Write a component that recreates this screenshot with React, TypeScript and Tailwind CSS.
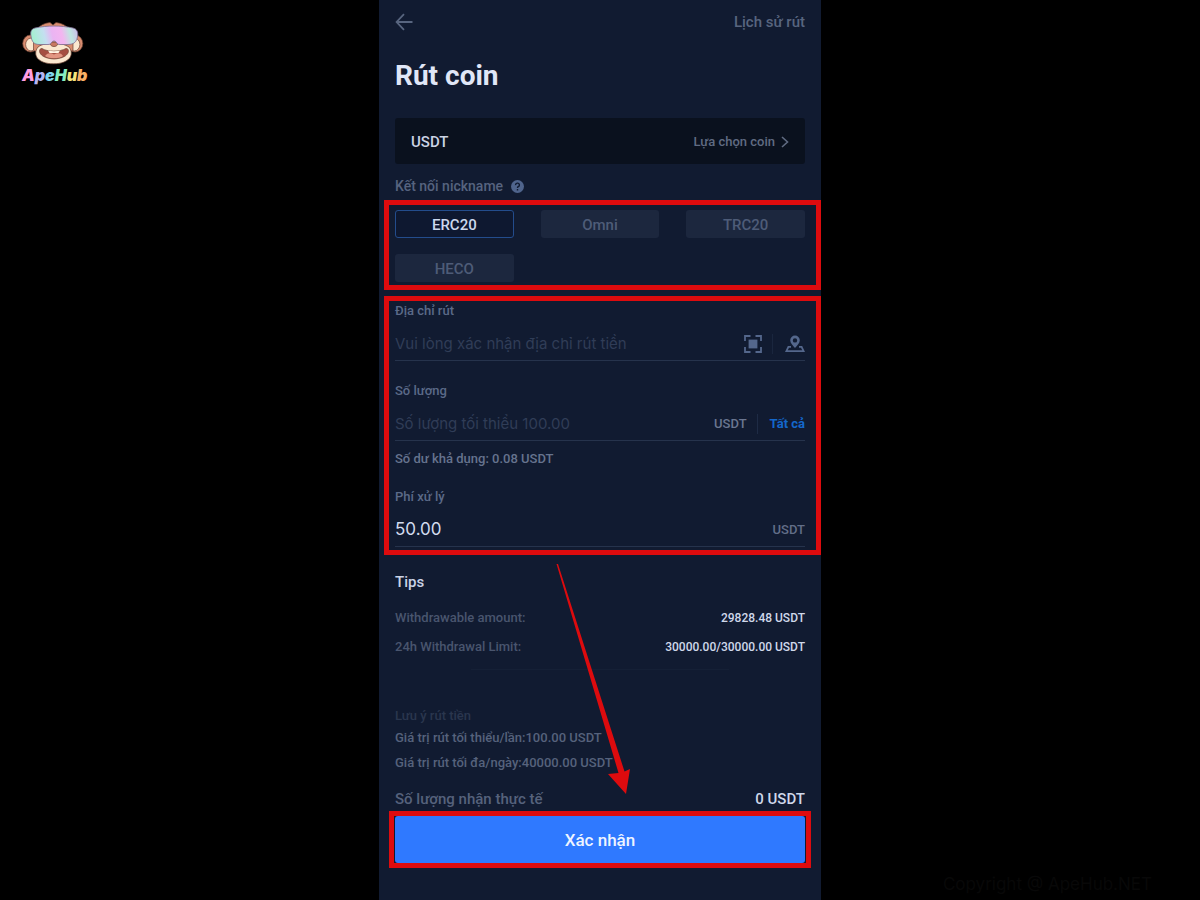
import React, { useState } from 'react';
import { clsx } from 'clsx';

const NETWORKS = ['ERC20', 'Omni', 'TRC20', 'HECO'];

const LOGO_LETTERS = [
  { char: 'A', className: 'text-[#ff9ee0]' },
  { char: 'p', className: 'text-[#b3b5f5]' },
  { char: 'e', className: 'text-[#7fd6f0]' },
  { char: 'H', className: 'text-[#86efc0]' },
  { char: 'u', className: 'text-[#f4e47c]' },
  { char: 'b', className: 'text-[#f9b066]' },
];

const Logo: React.FC = () => (
  <div className="flex flex-col items-start">
    <svg viewBox="-4 0 68 45" className="h-[45px] w-[68px]" aria-hidden="true">
      <defs>
        <linearGradient id="visor" x1="0" y1="0.1" x2="1" y2="0">
          <stop offset="0" stopColor="#a6efd2" />
          <stop offset="0.25" stopColor="#c4dff0" />
          <stop offset="0.42" stopColor="#eab4f2" />
          <stop offset="0.62" stopColor="#f3b5f0" />
          <stop offset="0.8" stopColor="#bfe6e0" />
          <stop offset="1" stopColor="#cdb6ea" />
        </linearGradient>
      </defs>
      <g stroke="#6b4234" strokeWidth="0.7">
        <ellipse cx="6.5" cy="21.5" rx="7.8" ry="8.5" fill="#d98d70" />
        <ellipse cx="51" cy="21.5" rx="7.8" ry="8.5" fill="#d98d70" />
        <ellipse cx="7" cy="22.5" rx="5.4" ry="6.4" fill="#fbe8d0" />
        <ellipse cx="50.5" cy="22.5" rx="5.4" ry="6.4" fill="#fbe8d0" />
        <path d="M9.5 20C10 9 14 2 26 0.5L29 3L32 0.5C44 2 48 9 49 20V28C46 32 12 32 9.5 28Z" fill="#d98d70" />
        <path d="M14 25C8 33 14 41.8 29.5 41.8S51 33 45 25C40 22 35 21 29.5 22C24 21 18 22 14 25Z" fill="#fbe8d0" />
        <path d="M18 26.5C23 30 36 30 42 26.5C46 26 47 36 30 37C13 36 14 26 18 26.5Z" fill="#a54f42" />
        <path d="M21 34C24 30.5 27 31 30 32.5C33 31 37 30.5 39 34C35 37 25 37 21 34Z" fill="#e29683" stroke="none" />
        <path d="M24 28.6C28 29.4 32 29.4 36 28.6L34.5 31H25.5Z" fill="#fff4e4" stroke="none" />
        <path d="M26 22C27 19.5 33 19.5 34 22C33 24 31.5 24.5 30 24.5S27 24 26 22Z" fill="#c97862" />
      </g>
      <path
        d="M11 6C23 3.4 37 3.4 49 6C53 7 54.2 10 53.6 14C52.8 20 50 22.3 44 22.5H36C32 22.5 33 19 30 19S28 22.5 24 22.5H15C10 22.3 7.8 20 7 14C6.2 10 7 7 11 6Z"
        fill="url(#visor)"
        stroke="#7d6d92"
        strokeWidth="0.8"
      />
    </svg>
    <p className="ml-0.5 font-['Inter',sans-serif] text-[16px] leading-4 font-black italic">
      {LOGO_LETTERS.map(({ char, className }) => (
        <span key={char} className={className}>{char}</span>
      ))}
    </p>
  </div>
);

const ScanIcon: React.FC = () => (
  <svg viewBox="0 0 18 18" className="h-[18px] w-[18px]" fill="none" aria-hidden="true">
    <path d="M1 6V1H6.5M11.5 1H17V6M17 12V17H11.5M6.5 17H1V12" stroke="currentColor" strokeWidth="1.8" />
    <rect x="4.6" y="4.6" width="8.8" height="8.8" fill="currentColor" />
  </svg>
);

const AddressIcon: React.FC = () => (
  <svg viewBox="0 0 20 18" className="h-[18px] w-5" fill="none" aria-hidden="true">
    <path
      d="M10 0.5A4.8 4.8 0 0 0 5.2 5.3C5.2 8.4 8 10.6 10 13C12 10.6 14.8 8.4 14.8 5.3A4.8 4.8 0 0 0 10 0.5ZM10 3.2A2.2 2.2 0 1 1 10 7.6A2.2 2.2 0 0 1 10 3.2Z"
      fill="currentColor"
      fillRule="evenodd"
    />
    <path d="M6 11.8H3.4L1.4 16.2H18.6L16.6 11.8H14" stroke="currentColor" strokeWidth="1.8" />
  </svg>
);

interface FieldProps {
  id: string;
  label: string;
  placeholder?: string;
  value?: string;
  readOnly?: boolean;
  onChange?: (value: string) => void;
  children?: React.ReactNode;
}

const Field: React.FC<FieldProps> = ({ id, label, placeholder, value, readOnly, onChange, children }) => (
  <div>
    <label htmlFor={id} className="block text-[13px] leading-5 text-[#5b6a88]">{label}</label>
    <div className="mt-[7px] flex h-[33px] items-center border-b border-[#26334c]">
      <input
        id={id}
        value={value}
        readOnly={readOnly}
        placeholder={placeholder}
        onChange={e => onChange?.(e.target.value)}
        className={clsx(
          "min-w-0 flex-1 bg-transparent font-['Inter',sans-serif] font-normal text-[#d3dcef] outline-none placeholder:text-[#303d57]",
          readOnly ? 'text-[17px]' : 'text-[15px]'
        )}
      />
      {children}
    </div>
  </div>
);

export default function App() {
  const [network, setNetwork] = useState('ERC20');
  const [address, setAddress] = useState('');
  const [amount, setAmount] = useState('');

  return (
    <div className="grid min-h-screen grid-cols-[1fr_minmax(0,442px)_1fr] bg-black font-['Roboto',sans-serif] font-medium">
      <aside className="pt-[22px] pl-5">
        <Logo />
      </aside>

      <main className="relative bg-[#111b31] px-4 pb-8">
        <header className="flex h-11 items-center justify-between text-[#58657f]">
          <button type="button" aria-label="Quay lại">
            <svg viewBox="0 0 18 18" className="h-[18px] w-[18px]" fill="none" stroke="currentColor" strokeWidth="1.8" aria-hidden="true">
              <path d="M9 1.2L1.6 9L9 16.8M1.6 9H17.5" />
            </svg>
          </button>
          <a href="#history" className="text-[15px]">Lịch sử rút</a>
        </header>

        <h1 className="mt-3 text-[28px] leading-10 font-bold text-[#e0e7f7]">Rút coin</h1>

        <button type="button" className="mt-[22px] flex h-[46px] w-full items-center justify-between rounded-[3px] bg-[#0a111e] px-4 pt-0.5">
          <span className="text-[15px] text-[#cbd3e4]">USDT</span>
          <span className="flex items-center gap-1.5 text-[13px] text-[#606b82]">
            Lựa chọn coin
            <svg viewBox="0 0 8 12" className="h-3 w-2" fill="none" stroke="currentColor" strokeWidth="1.6" aria-hidden="true">
              <path d="M1 1L6.5 6L1 11" />
            </svg>
          </span>
        </button>

        <div className="mt-3 flex h-5 items-center gap-2 text-[14px] text-[#56637f]">
          Kết nối nickname
          <svg viewBox="0 0 12 12" className="h-[13px] w-[13px]" aria-hidden="true">
            <circle cx="6" cy="6" r="6" fill="#4f648c" />
            <path d="M4.2 4.8A1.8 1.7 0 1 1 6.6 6.2Q6 6.5 6 7.3M6 8.4V9.6" fill="none" stroke="#111b31" strokeWidth="1.3" />
          </svg>
        </div>

        <section className="mt-1 -mr-4 -ml-[11px] grid grid-cols-3 gap-x-[27px] gap-y-4 border-[5px] border-[#dd0b0e] pt-[5px] pr-[11px] pb-[3px] pl-1.5">
          {NETWORKS.map(item => (
            <button
              key={item}
              type="button"
              aria-pressed={network === item}
              onClick={() => setNetwork(item)}
              className={clsx(
                'h-7 rounded-[3px] border pt-0.5 text-[15px] leading-none',
                network === item
                  ? 'border-[#234c8c] bg-[#0e1830] text-[#ccd8ee]'
                  : 'border-transparent bg-[#1c273e] text-[#4e5c78]'
              )}
            >
              {item}
            </button>
          ))}
        </section>

        <section className="mt-1.5 -mr-4 -ml-[11px] border-[5px] border-[#dd0b0e] pr-[11px] pb-[3px] pl-1.5">
          <Field
            id="address"
            label="Địa chỉ rút"
            placeholder="Vui lòng xác nhận địa chỉ rút tiền"
            value={address}
            onChange={setAddress}
          >
            <div className="flex items-center text-[#54678c]">
              <button type="button" aria-label="Quét mã"><ScanIcon /></button>
              <span className="ml-2.5 h-5 w-px bg-[#1a263e]" />
              <button type="button" aria-label="Sổ địa chỉ" className="ml-3"><AddressIcon /></button>
            </div>
          </Field>

          <div className="mt-5">
            <Field
              id="amount"
              label="Số lượng"
              placeholder="Số lượng tối thiểu 100.00"
              value={amount}
              onChange={setAmount}
            >
              <div className="flex items-center text-[13px]">
                <span className="text-[#6a7690]">USDT</span>
                <span className="ml-2.5 h-5 w-px bg-[#1e2b45]" />
                <button type="button" className="ml-3 font-bold text-[#1467cb]" onClick={() => setAmount('0.08')}>Tất cả</button>
              </div>
            </Field>
          </div>
          <p className="mt-2 text-[13px] leading-5 text-[#66738e]">Số dư khả dụng: 0.08 USDT</p>

          <div className="mt-[18px]">
            <Field id="fee" label="Phí xử lý" value="50.00" readOnly>
              <span className="text-[13px] text-[#626e88]">USDT</span>
            </Field>
          </div>
        </section>

        <section className="mt-[17px] text-[13px] leading-5">
          <h2 className="text-[15px] text-[#cad3e6]">Tips</h2>
          <dl>
            <div className="mt-4 flex justify-between">
              <dt className="text-[#49556e]">Withdrawable amount:</dt>
              <dd className="text-[12px] text-[#cfd8ea]">29828.48 USDT</dd>
            </div>
            <div className="mt-[9px] flex justify-between">
              <dt className="text-[#49556e]">24h Withdrawal Limit:</dt>
              <dd className="text-[12px] text-[#cfd8ea]">30000.00/30000.00 USDT</dd>
            </div>
          </dl>
          <div className="mx-auto mt-3 h-px w-[63%] bg-[#152036]" />
        </section>

        <section className="mt-9 text-[13px] leading-5 text-[#56627c]">
          <h2 className="text-[#2a364e]">Lưu ý rút tiền</h2>
          <p className="mt-0.5">Giá trị rút tối thiểu/lần:100.00 USDT</p>
          <p className="mt-[5px]">Giá trị rút tối đa/ngày:40000.00 USDT</p>
        </section>

        <div className="mt-4 flex items-center justify-between text-[15px] leading-5">
          <span className="text-[#56627c]">Số lượng nhận thực tế</span>
          <span className="text-[#cfd8ea]">0 USDT</span>
        </div>

        <div className="-mx-1.5 mt-0.5 border-[5px] border-[#dd0b0e] px-px">
          <button type="button" className="block h-[47px] w-full rounded-[3px] bg-[#2f79ff] pt-0.5 text-[17px] text-[#edf4ff]">
            Xác nhận
          </button>
        </div>

        {/* pointer from the form down to the confirm button */}
        <svg viewBox="0 0 76 232" className="pointer-events-none absolute top-[563px] left-[177px] h-[232px] w-[76px]" fill="#dd0b0e" aria-hidden="true">
          <path d="M0.5 1L2 1L68.5 208.5L74 206L70 231L52 211L62.5 210Z" />
        </svg>
      </main>

      <aside className="flex items-end justify-end pr-12 pb-1">
        <p className="font-['Inter',sans-serif] text-[17px] leading-6 font-normal text-[#080808]">Copyright @ ApeHub.NET</p>
      </aside>
    </div>
  );
}
